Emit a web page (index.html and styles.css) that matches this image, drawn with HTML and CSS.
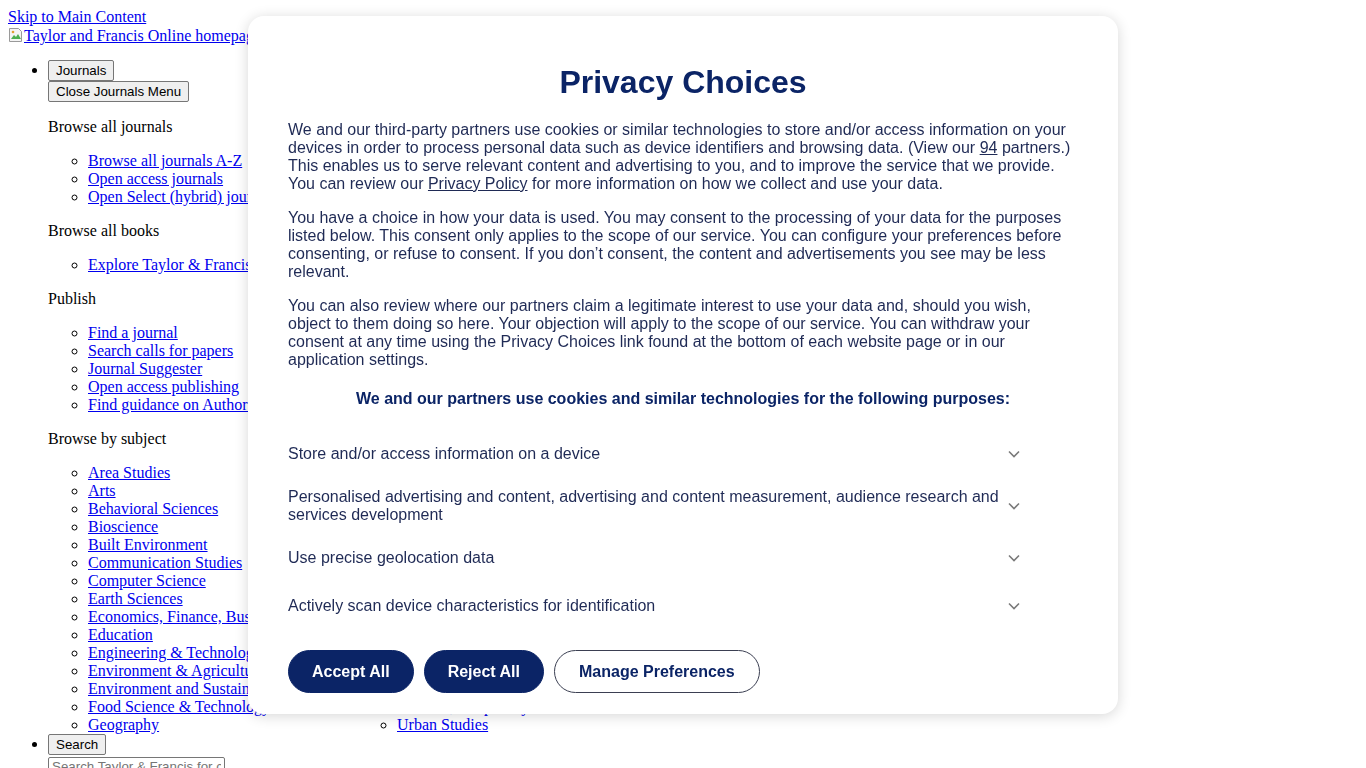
FILE: index.html
```html
<!DOCTYPE html>
<html lang="en">
<head>
<meta charset="utf-8">
<title>Taylor &amp; Francis Online</title>
<link rel="stylesheet" href="styles.css">
</head>
<body>
<a class="skip" href="#main">Skip to Main Content</a><br>
<a class="logo" href="#"><svg class="broken" width="16" height="16" viewBox="0 0 16 16" aria-hidden="true"><path d="M1.5 1.5h9l3 3v10h-12z" fill="#f4f4f4" stroke="#9a9a9a"/><path d="M3 12l3-4 2 2 2-3 3 5z" fill="#4caf50"/><circle cx="5" cy="5" r="1.3" fill="#e0a030"/></svg>Taylor and Francis Online homepage</a>
<ul class="nav">
  <li>
    <div><button type="button" class="btn-native">Journals</button></div>
    <div><button type="button" class="btn-native">Close Journals Menu</button></div>
    <p class="group">Browse all journals</p>
    <ul class="sub">
      <li><a href="#">Browse all journals A-Z</a></li>
      <li><a href="#">Open access journals</a></li>
      <li><a href="#">Open Select (hybrid) journals</a></li>
    </ul>
    <p class="group">Browse all books</p>
    <ul class="sub">
      <li><a href="#">Explore Taylor &amp; Francis eBooks</a></li>
    </ul>
    <p class="group">Publish</p>
    <ul class="sub">
      <li><a href="#">Find a journal</a></li>
      <li><a href="#">Search calls for papers</a></li>
      <li><a href="#">Journal Suggester</a></li>
      <li><a href="#">Open access publishing</a></li>
      <li><a href="#">Find guidance on Author Services</a></li>
    </ul>
    <p class="group">Browse by subject</p>
    <ul class="sub subjects">
      <li><a href="#">Area Studies</a></li>
      <li><a href="#">Arts</a></li>
      <li><a href="#">Behavioral Sciences</a></li>
      <li><a href="#">Bioscience</a></li>
      <li><a href="#">Built Environment</a></li>
      <li><a href="#">Communication Studies</a></li>
      <li><a href="#">Computer Science</a></li>
      <li><a href="#">Earth Sciences</a></li>
      <li><a href="#">Economics, Finance, Business &amp; Industry</a></li>
      <li><a href="#">Education</a></li>
      <li><a href="#">Engineering &amp; Technology</a></li>
      <li><a href="#">Environment &amp; Agriculture</a></li>
      <li><a href="#">Environment and Sustainability</a></li>
      <li><a href="#">Food Science &amp; Technology</a></li>
      <li><a href="#">Geography</a></li>
      <li><a href="#">Global Development</a></li>
      <li><a href="#">Health and Social Care</a></li>
      <li><a href="#">Humanities</a></li>
      <li><a href="#">Information Science</a></li>
      <li><a href="#">Language &amp; Literature</a></li>
      <li><a href="#">Law</a></li>
      <li><a href="#">Mathematics</a></li>
      <li><a href="#">Medicine, Dentistry, Nursing &amp; Allied Health</a></li>
      <li><a href="#">Museum and Heritage Studies</a></li>
      <li><a href="#">Physical Sciences</a></li>
      <li><a href="#">Politics &amp; International Relations</a></li>
      <li><a href="#">Social Sciences</a></li>
      <li><a href="#">Sports and Leisure</a></li>
      <li><a href="#">Tourism, Hospitality and Events</a></li>
      <li><a href="#">Urban Studies</a></li>
    </ul>
  </li>
  <li>
    <div><button type="button" class="btn-native">Search</button></div>
    <div><input class="search-input" type="text" placeholder="Search Taylor &amp; Francis for content"></div>
  </li>
</ul>

<div class="modal" role="dialog" aria-labelledby="pc-title">
  <h2 id="pc-title" class="modal-title">Privacy Choices</h2>
  <p class="modal-text">We and our third-party partners use cookies or similar technologies to store and/or access information on your devices in order to process personal data such as device identifiers and browsing data. (View our <a href="#">94</a> partners.) This enables us to serve relevant content and advertising to you, and to improve the service that we provide. You can review our <a href="#">Privacy Policy</a> for more information on how we collect and use your data.</p>
  <p class="modal-text">You have a choice in how your data is used. You may consent to the processing of your data for the purposes listed below. This consent only applies to the scope of our service. You can configure your preferences before consenting, or refuse to consent. If you don’t consent, the content and advertisements you see may be less relevant.</p>
  <p class="modal-text">You can also review where our partners claim a legitimate interest to use your data and, should you wish, object to them doing so here. Your objection will apply to the scope of our service. You can withdraw your consent at any time using the Privacy Choices link found at the bottom of each website page or in our application settings.</p>
  <h3 class="purposes-title">We and our partners use cookies and similar technologies for the following purposes:</h3>
  <div class="purposes">
    <div class="purpose"><span class="purpose-label">Store and/or access information on a device</span><span class="chev"><svg width="12" height="8" viewBox="0 0 12 8"><path d="M1 1.5l5 5 5-5" fill="none" stroke="#7a7a7a" stroke-width="1.6"/></svg></span></div>
    <div class="purpose"><span class="purpose-label">Personalised advertising and content, advertising and content measurement, audience research and services development</span><span class="chev"><svg width="12" height="8" viewBox="0 0 12 8"><path d="M1 1.5l5 5 5-5" fill="none" stroke="#7a7a7a" stroke-width="1.6"/></svg></span></div>
    <div class="purpose"><span class="purpose-label">Use precise geolocation data</span><span class="chev"><svg width="12" height="8" viewBox="0 0 12 8"><path d="M1 1.5l5 5 5-5" fill="none" stroke="#7a7a7a" stroke-width="1.6"/></svg></span></div>
    <div class="purpose"><span class="purpose-label">Actively scan device characteristics for identification</span><span class="chev"><svg width="12" height="8" viewBox="0 0 12 8"><path d="M1 1.5l5 5 5-5" fill="none" stroke="#7a7a7a" stroke-width="1.6"/></svg></span></div>
  </div>
  <div class="actions">
    <button type="button" class="pill pill-solid">Accept All</button>
    <button type="button" class="pill pill-solid">Reject All</button>
    <button type="button" class="pill pill-outline">Manage Preferences</button>
  </div>
</div>
</body>
</html>
```
FILE: styles.css
```css
html, body {
  background: #ffffff;
}
body {
  margin: 8px;
  font-family: "Liberation Serif", "Times New Roman", serif;
  font-size: 16px;
  line-height: 18px;
  color: #000;
}
a { color: #0000ee; }

.logo {
  display: inline-block;
  padding-top: 1px;
}
.logo .broken {
  vertical-align: -2px;
}

.nav {
  margin: 15px 0 0;
  padding-left: 40px;
  list-style: disc;
}
.btn-native {
  display: block;
  font-family: "Liberation Sans", Arial, sans-serif;
  font-size: 13.333px;
  line-height: 17px;
  padding: 1px 7px;
  margin: 0;
  background: #efefef;
  border: 1px solid #767676;
  border-radius: 2px;
  color: #000;
}
.group {
  margin: 16px 0;
}
.sub {
  margin: 0;
  padding-left: 40px;
  list-style: circle;
}
.subjects {
  width: 602px;
  column-count: 2;
  column-gap: 16px;
}
.search-input {
  display: block;
  font-family: "Liberation Sans", Arial, sans-serif;
  font-size: 13.333px;
  width: 177px;
  box-sizing: border-box;
  padding: 1px 3px;
  margin-top: 2px;
  border: 1px solid #767676;
  border-radius: 2px;
}

/* Consent dialog */
.modal {
  position: fixed;
  left: 248px;
  top: 16px;
  width: 870px;
  height: 698px;
  box-sizing: border-box;
  padding: 48px 40px 21px;
  background: #fff;
  border-radius: 16px;
  box-shadow: 0 2px 14px rgba(0, 0, 0, 0.16);
  font-family: "Liberation Sans", Arial, sans-serif;
  color: #1f2a55;
  overflow: hidden;
}
.modal a { color: inherit; }
.modal-title {
  margin: 0 0 20px;
  font-size: 32px;
  line-height: 37px;
  font-weight: 700;
  text-align: center;
  color: #0b2466;
}
.modal-text {
  margin: 0 0 16px;
  font-size: 16px;
  line-height: 18px;
}
.purposes-title {
  margin: 21px 0 22px;
  font-size: 16px;
  line-height: 18px;
  font-weight: 700;
  text-align: center;
  color: #0b2466;
}
.purposes {
  margin-right: 52px;
}
.purpose {
  display: flex;
  align-items: center;
  min-height: 48px;
  box-sizing: border-box;
  padding: 10px 0;
  font-size: 16px;
  line-height: 18px;
}
.purpose-label {
  flex: 1;
}
.chev {
  width: 24px;
  display: flex;
  justify-content: center;
  align-items: center;
}
.chev svg { display: block; }
.actions {
  display: flex;
  gap: 10px;
  margin-top: 20px;
}
.pill {
  font-family: "Liberation Sans", Arial, sans-serif;
  font-size: 16px;
  font-weight: 700;
  line-height: 17px;
  padding: 12px 23px;
  border-radius: 999px;
  border: 1px solid #0b2466;
}
.pill-solid {
  background: #0b2466;
  color: #fff;
}
.pill-outline {
  padding: 12px 24px;
  background: #fff;
  color: #0b2466;
  border-color: #3b3f52;
}
```
